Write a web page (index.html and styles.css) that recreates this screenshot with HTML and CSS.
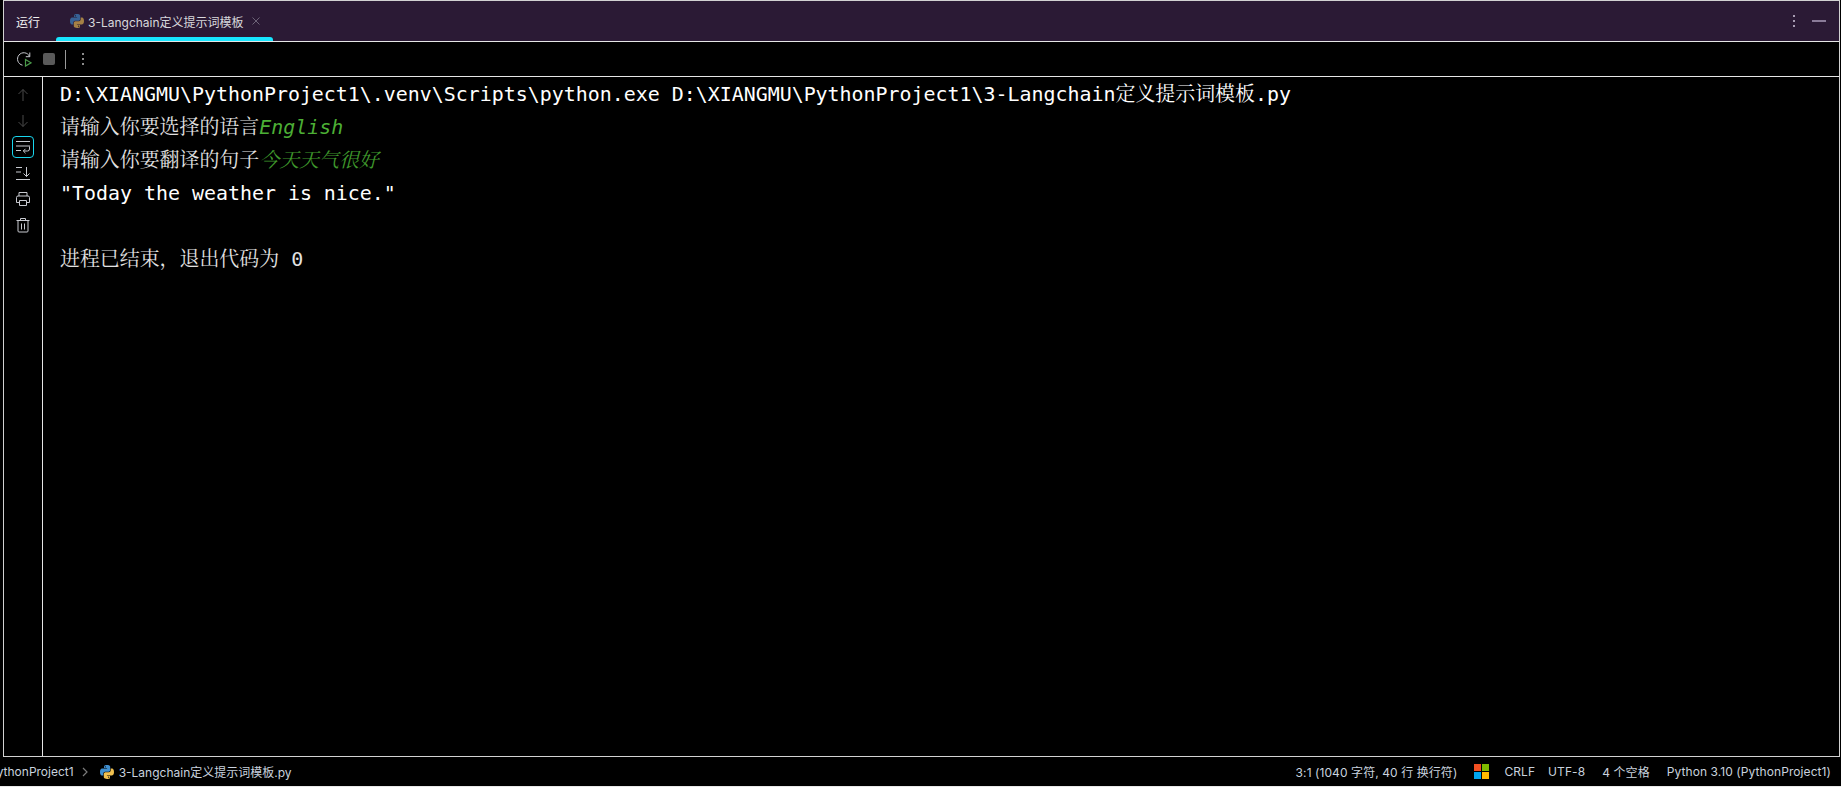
FILE: index.html
```html
<!DOCTYPE html>
<html lang="zh-CN">
<head>
<meta charset="utf-8">
<title>运行</title>
<link rel="stylesheet" href="styles.css">
</head>
<body>
<div class="panel">
  <header class="tabs">
    <span class="tabs-title">运行</span>
    <div class="tab">
      <svg class="ico16 dim" viewBox="0 0 16 16"><path class="py-b" d="M7.900 1C5 1 5 2.300 5 2.300V4h3.100v.6H3.300S1 4.400 1 8s2 3.500 2 3.500h1.300V9.800s-.1-2 2-2h3.100s1.800 0 1.800-1.800V2.900S11.400 1 7.900 1z"/><path class="py-y" d="M8.100 15c2.900 0 2.900-1.300 2.900-1.300V12H7.900v-.6h4.800S15 11.600 15 8s-2-3.500-2-3.500h-1.300v1.700s.1 2-2 2H6.600s-1.800 0-1.800 1.800v3.100S4.600 15 8.100 15z"/><circle class="py-eye" cx="6.300" cy="2.800" r=".6"/><circle class="py-eye" cx="9.700" cy="13.200" r=".6"/></svg>
      <span class="tab-name">3-Langchain定义提示词模板</span>
      <svg class="tab-close" viewBox="0 0 8 8"><path d="M.5.500l7 7M7.500.500l-7 7"/></svg>
    </div>
    <div class="tabs-actions">
      <span class="dots"><i></i><i></i><i></i></span>
      <span class="minimize"></span>
    </div>
  </header>
  <div class="toolbar">
    <svg class="tool-rerun" viewBox="0 0 16 16"><path class="stroke-light" d="M6.500 14.200A6.300 6.300 0 1 1 13.600 5.500M13.800 1.500v4.200H9.800"/><path class="play" d="M9.500 8.500l5.500 3.300-5.500 3.300z"/></svg>
    <span class="tool-stop"></span>
    <span class="tool-sep"></span>
    <span class="dots small"><i></i><i></i><i></i></span>
  </div>
  <div class="main">
    <aside class="side">
      <span class="side-btn"><svg viewBox="0 0 16 16"><path class="stroke-dim" d="M8 14V2.500M3.500 7L8 2.500 12.500 7"/></svg></span>
      <span class="side-btn"><svg viewBox="0 0 16 16"><path class="stroke-dim" d="M8 2v11.500M3.500 9L8 13.500 12.500 9"/></svg></span>
      <span class="side-btn active"><svg viewBox="0 0 16 16"><path class="stroke-light" d="M1 2.500h14M1 7h14M1 11.500h5"/><path class="stroke-light" d="M14.500 7.500v2.500a2 2 0 0 1-2 2H8.500M10.500 9.800l-2.200 2.200 2.200 2.200"/></svg></span>
      <span class="side-btn"><svg viewBox="0 0 16 16"><path class="stroke-light" d="M1 2.500h6M1 7h5M1 14.500h14M11.500 2v9.500M8.500 8.500l3 3 3-3"/></svg></span>
      <span class="side-btn"><svg viewBox="0 0 16 16"><path class="stroke-light" d="M4 5V1.500h8V5M4 11.500H1.500V6.500a1.500 1.500 0 0 1 1.500-1.500h10a1.500 1.500 0 0 1 1.500 1.500v5H12M4.500 9.500h7v5h-7z"/></svg></span>
      <span class="side-btn"><svg viewBox="0 0 16 16"><path class="stroke-light" d="M1.500 3.500h13M5.500 3.500V1.500h5v2M3 3.500v10.500a1 1 0 0 0 1 1h8a1 1 0 0 0 1-1V3.500M6.500 6.500v6M9.500 6.500v6"/></svg></span>
    </aside>
    <div class="console">
      <div class="line">D:\XIANGMU\PythonProject1\.venv\Scripts\python.exe D:\XIANGMU\PythonProject1\3-Langchain定义提示词模板.py</div>
      <div class="line soft">请输入你要选择的语言<em class="input">English</em></div>
      <div class="line soft">请输入你要翻译的句子<em class="input cjk">今天天气很好</em></div>
      <div class="line">"Today the weather is nice."</div>
      <div class="line">&nbsp;</div>
      <div class="line soft">进程已结束，退出代码为 0</div>
    </div>
  </div>
</div>
<footer class="status">
  <div class="crumbs">
    <span class="crumb-root">PythonProject1</span>
    <svg class="chev" viewBox="0 0 6 10"><path d="M1 1l4 4-4 4"/></svg>
    <svg class="ico16" viewBox="0 0 16 16"><path class="py-b" d="M7.900 1C5 1 5 2.300 5 2.300V4h3.100v.6H3.300S1 4.400 1 8s2 3.500 2 3.500h1.300V9.800s-.1-2 2-2h3.100s1.800 0 1.800-1.800V2.900S11.400 1 7.900 1z"/><path class="py-y" d="M8.100 15c2.900 0 2.900-1.300 2.900-1.300V12H7.900v-.6h4.800S15 11.600 15 8s-2-3.500-2-3.500h-1.300v1.700s.1 2-2 2H6.600s-1.800 0-1.800 1.800v3.100S4.600 15 8.100 15z"/><circle class="py-eye" cx="6.300" cy="2.800" r=".6"/><circle class="py-eye" cx="9.700" cy="13.200" r=".6"/></svg>
    <span>3-Langchain定义提示词模板.py</span>
  </div>
  <div class="status-right">
    <span>3:1 (1040 字符, 40 行 换行符)</span>
    <svg class="ms" viewBox="0 0 15 15"><rect width="7" height="7" fill="#f25022"/><rect x="8" width="7" height="7" fill="#7fba00"/><rect y="8" width="7" height="7" fill="#00a4ef"/><rect x="8" y="8" width="7" height="7" fill="#ffb900"/></svg>
    <span>CRLF</span>
    <span class="enc">UTF-8</span>
    <span>4 个空格</span>
    <span>Python 3.10 (PythonProject1)</span>
  </div>
</footer>
</body>
</html>
```
FILE: styles.css
```css
* { box-sizing: border-box; }
html, body { margin: 0; height: 787px; background: #000; overflow: hidden; }
body { display: flex; flex-direction: column; font-family: Inter, "Noto Sans CJK SC", sans-serif; font-size: 12px; color: #dfe1e5; }

.panel { height: 757px; margin: 0 1px 0 3px; border: 1px solid #d2d2d2; display: flex; flex-direction: column; }

.tabs { height: 41px; flex: none; display: flex; align-items: center; background: #2b1a35; border-bottom: 1px solid #e6e6e6; padding-left: 12px; }
.tabs-title { color: #f2f2f2; width: 24px; }
.tab { position: relative; height: 40px; margin-left: 16px; width: 217px; padding-left: 13px; display: flex; align-items: center; gap: 3px; }
.tab::after { content: ""; position: absolute; left: 0; right: 0; bottom: 0; height: 4px; border-radius: 3px 3px 0 0; background: #17e6ff; }
.tab-name { color: #d8d8dc; white-space: nowrap; width: 154px; }
.tab-close { width: 8px; height: 8px; margin-left: 7px; }
.tab-close path { fill: none; stroke: #6d6478; stroke-width: 1; }
.tabs-actions { margin-left: auto; display: flex; align-items: center; gap: 17px; padding-right: 13px; }
.dots { display: flex; flex-direction: column; gap: 3px; }
.dots i { display: block; width: 2px; height: 2px; background: #a79cb2; }
.minimize { width: 14px; height: 2px; background: #8a7b98; }

.ico16 { width: 16px; height: 16px; flex: none; }
.py-b { fill: #3f8fd0; }
.py-y { fill: #f0c050; }
.py-eye { fill: #000; }
.dim { opacity: .62; }

.toolbar { height: 35px; flex: none; display: flex; align-items: center; border-bottom: 1px solid #e6e6e6; padding-left: 12px; }
.tool-rerun { width: 16px; height: 16px; }
.stroke-light, .stroke-dim { fill: none; stroke-width: 1; }
.stroke-light { stroke: #c8cad0; }
.stroke-dim { stroke: #4a4a4a; }
.play { fill: #000; stroke: #4a9a4a; stroke-width: 1.2; }
.tool-stop { width: 12px; height: 12px; margin-left: 11px; background: #5a5a5a; border-radius: 2px; }
.tool-sep { width: 1px; height: 19px; margin-left: 10px; background: #9a9a9a; }
.dots.small { margin-left: 16px; }
.dots.small i { background: #8c8c8c; }

.main { flex: 1; display: flex; min-height: 0; }
.side { width: 39px; flex: none; border-right: 1px solid #e6e6e6; display: flex; flex-direction: column; align-items: center; gap: 4px; padding-top: 7px; }
.side-btn { width: 22px; height: 22px; display: flex; align-items: center; justify-content: center; border-radius: 4px; border: 1px solid transparent; }
.side-btn svg { width: 16px; height: 16px; }
.side-btn.active { border-color: #19d6ee; }

.console { flex: 1; padding: 1px 0 0 17px; font-family: "DejaVu Sans Mono", "Noto Serif CJK SC", "Noto Sans CJK SC", monospace; font-size: 19.93px; line-height: 33.1px; color: #fff; }
.line { white-space: pre; }
.soft { color: #e2e2e2; }
.input { color: #4caf35; font-style: italic; }
.input.cjk { color: #3f982c; }

.status { height: 30px; flex: none; display: flex; align-items: center; justify-content: space-between; border-bottom: 1px solid #e8e8e8; overflow: hidden; white-space: nowrap; color: #c9d2de; }
.crumbs { display: flex; align-items: center; margin-left: -11px; }
.crumb-root { margin-right: 8px; }
.chev { width: 6px; height: 10px; margin-right: 11px; }
.chev path { fill: none; stroke: #7a7a7a; stroke-width: 1.2; }
.crumbs .ico16 { margin-right: 4px; }
.status-right { display: flex; align-items: center; gap: 17px; padding-right: 10px; letter-spacing: .08px; }
.enc { margin-left: -4px; }
.ms { width: 15px; height: 15px; margin-right: -2px; }
```
